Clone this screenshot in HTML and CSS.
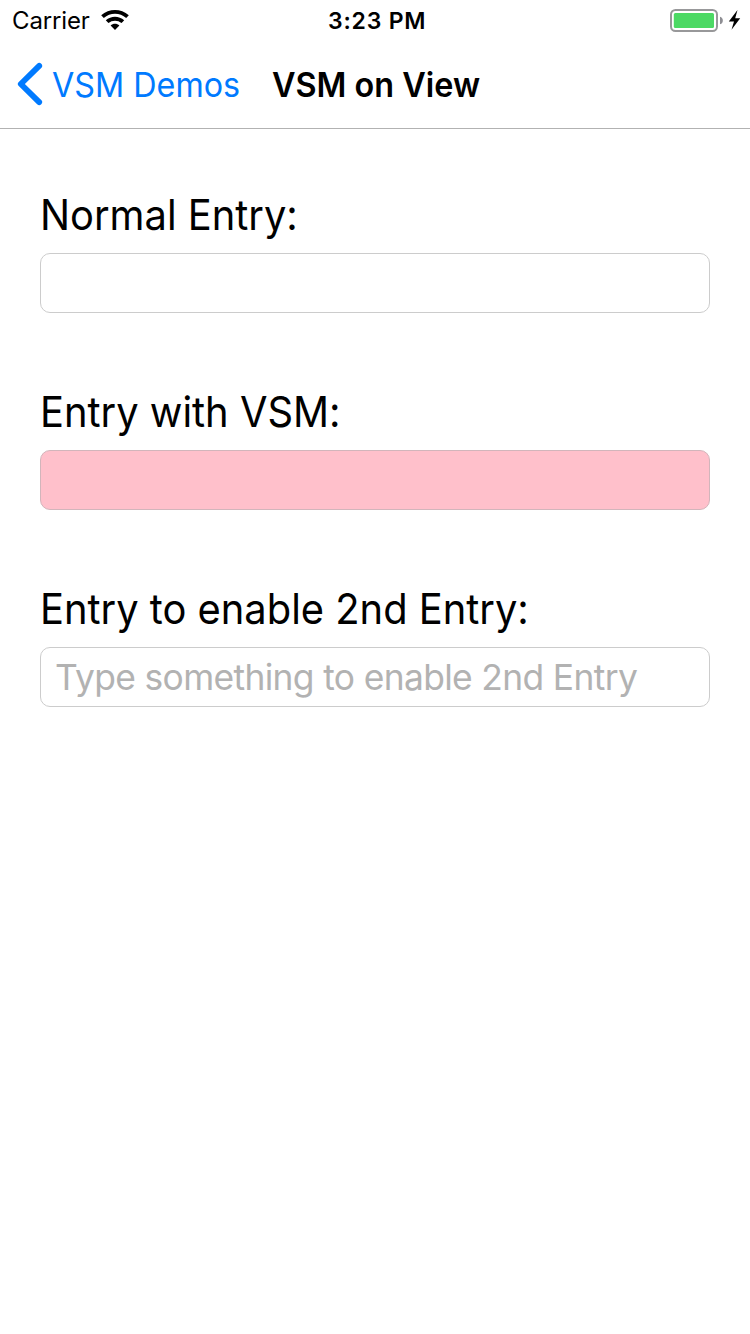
FILE: index.html
```html
<!DOCTYPE html>
<html lang="en">
<head>
<meta charset="utf-8">
<title>VSM on View</title>
<link rel="stylesheet" href="styles.css">
</head>
<body>
<header class="status">
  <div class="status-left"><span class="carrier">Carrier</span>
    <svg class="wifi" width="28" height="20" viewBox="0 0 28 20"><path d="M.2 5.3C8-1.7 20-1.7 27.8 5.3L25.2 8.1C19 2.3 9 2.3 2.8 8.1ZM4.8 10.2C10 5.5 18 5.5 23.2 10.2L20.6 13.1C17 9.8 11 9.8 7.4 13.1ZM9.6 15.4C12 13.1 16 13.1 18.4 15.4L14 20Z"/></svg>
  </div>
  <span class="time">3:23 PM</span>
  <svg class="battery" width="72" height="24" viewBox="0 0 72 24"><rect x="1" y="1" width="46" height="21" rx="4.5" fill="#fff" stroke="#98989a" stroke-width="2"/><rect x="3.8" y="4" width="40.2" height="15" rx="1.5" fill="#4cd964"/><path d="M50 7.7C53.8 8.5 53.8 14.5 50 15.3Z" fill="#8e8e93"/><path d="M67.5 1L58.8 12.5H64L61.5 20.7L70.2 9.2H65.2Z"/></svg>
</header>
<nav class="nav">
  <a class="back"><svg class="chevron" width="26" height="44" viewBox="0 0 26 44"><path d="M22.2 3.9L3.8 22L22.2 40.1" fill="none" stroke="#007aff" stroke-width="5.8" stroke-linecap="round" stroke-linejoin="round"/></svg><span class="back-text">VSM Demos</span></a>
  <h1 class="title">VSM on View</h1>
</nav>
<main class="form">
  <section class="group"><label class="label" for="a">Normal Entry:</label><input class="entry" id="a"></section>
  <section class="group"><label class="label" for="b">Entry with VSM:</label><input class="entry pink" id="b" disabled></section>
  <section class="group"><label class="label" for="c">Entry to enable 2nd Entry:</label><input class="entry" id="c" placeholder="Type something to enable 2nd Entry"></section>
</main>
</body>
</html>
```

FILE: styles.css
```css
* { box-sizing: border-box; }
body { margin: 0; background: #fff; color: #000; font-family: Inter, "Liberation Sans", sans-serif; height: 1334px; white-space: nowrap; }
.status { height: 40px; display: grid; grid-template-columns: 328px 1fr 72px; padding-right: 8px; align-items: center; }
.status-left { display: flex; align-items: center; padding-left: 12px; }
.carrier { font-size: 24px; width: 89px; letter-spacing: -.15px; padding-top: 1px; }
.time { font-size: 23px; font-weight: 600; letter-spacing: .8px; padding-top: 2px; }
.battery { margin-top: 2px; }
.nav { height: 89px; border-bottom: 1px solid #b2b2b2; display: flex; align-items: center; padding-left: 17px; }
.back { display: flex; align-items: center; color: #007aff; width: 255px; }
.back-text { font-size: 34px; margin-left: 8.5px; transform: scaleX(.95); transform-origin: left; }
.title { margin: 0; font-size: 34px; font-weight: 600; transform: scaleX(.952); transform-origin: left; }
.form { padding: 59px 40px 0; }
.group { height: 197px; }
.label { display: block; height: 65px; line-height: 54px; font-size: 42.5px; transform: scaleX(.938); transform-origin: left; font-feature-settings: "calt" 0; }
.entry { display: block; width: 670px; height: 60px; border: 1px solid #ccc; border-radius: 10px; padding: 0 14px; font: 35.4px Inter, "Liberation Sans", sans-serif; letter-spacing: -.65px; background: #fff; outline: 0; }
.entry::placeholder { color: #b2b2b2; opacity: 1; }
.pink { background: #ffc0cb; border-color: #d2b5bb; }
```
